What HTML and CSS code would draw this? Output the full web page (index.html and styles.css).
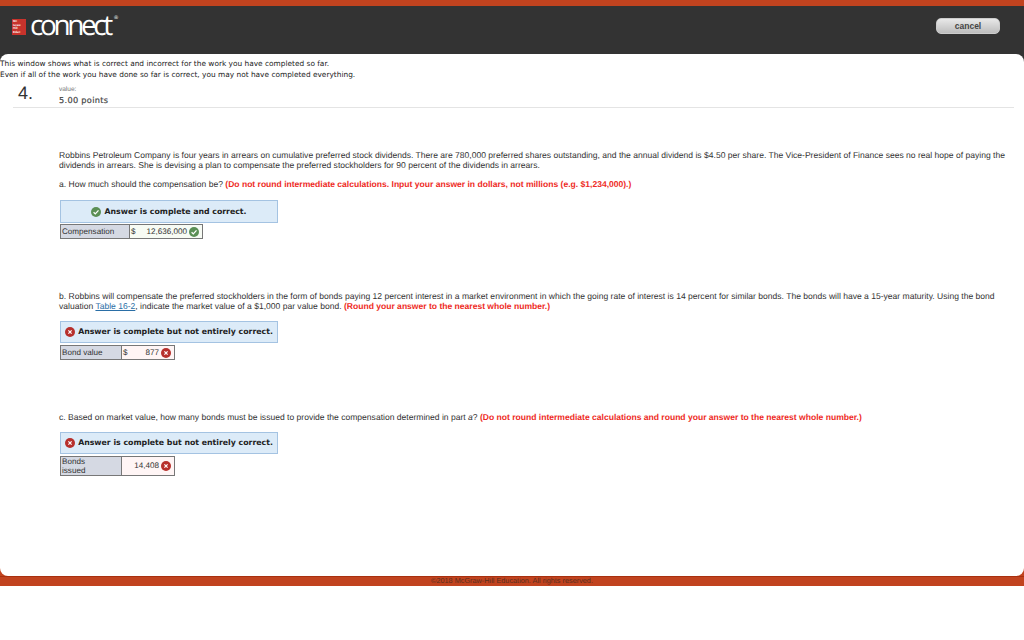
FILE: index.html
```html
<!DOCTYPE html>
<html lang="en">
<head>
    <meta charset="UTF-8">
    <title>Connect</title>
    <link rel="stylesheet" href="styles.css">
</head>
<body>
    <div class="top-strip"></div>
    <div class="header">
        <div class="logo">
            <div class="logo-mark">Mc<br>Graw<br>Hill<br>Educ</div>
            <div class="logo-word">connect<sup>®</sup></div>
        </div>
        <button class="cancel-btn">cancel</button>
    </div>

    <div class="shell">
        <div class="panel">
            <p class="intro">This window shows what is correct and incorrect for the work you have completed so far.<br>Even if all of the work you have done so far is correct, you may not have completed everything.</p>

            <div class="question-head">
                <div class="question-num">4.</div>
                <div>
                    <div class="value-label">value:</div>
                    <div class="value-points">5.00 points</div>
                </div>
            </div>

            <div class="question">
                <p class="para-first">Robbins Petroleum Company is four years in arrears on cumulative preferred stock dividends. There are 780,000 preferred shares outstanding, and the annual dividend is $4.50 per share. The Vice-President of Finance sees no real hope of paying the dividends in arrears. She is devising a plan to compensate the preferred stockholders for 90 percent of the dividends in arrears.</p>
                <p class="para-part">a. How much should the compensation be? <b class="hint">(Do not round intermediate calculations. Input your answer in dollars, not millions (e.g. $1,234,000).)</b></p>

                <div class="banner banner-a">
                    <svg class="mark" viewBox="0 0 10 10"><circle cx="5" cy="5" r="5" fill="#5b8f55"/><path d="M2.6 5.2 4.3 6.9 7.5 3.4" fill="none" stroke="#fff" stroke-width="1.3"/></svg>
                    Answer is complete and correct.
                </div>
                <div class="answer answer-a">
                    <div class="answer-label label-a">Compensation</div>
                    <div class="answer-value good"><span>$</span><span class="amount">12,636,000</span>
                        <svg class="mark" viewBox="0 0 10 10"><circle cx="5" cy="5" r="5" fill="#5b8f55"/><path d="M2.6 5.2 4.3 6.9 7.5 3.4" fill="none" stroke="#fff" stroke-width="1.3"/></svg>
                    </div>
                </div>

                <p class="para-b">b. Robbins will compensate the preferred stockholders in the form of bonds paying 12 percent interest in a market environment in which the going rate of interest is 14 percent for similar bonds. The bonds will have a 15-year maturity. Using the bond valuation <a class="table-link">Table 16-2</a>, indicate the market value of a $1,000 par value bond. <b class="hint">(Round your answer to the nearest whole number.)</b></p>

                <div class="banner">
                    <svg class="mark" viewBox="0 0 10 10"><circle cx="5" cy="5" r="5" fill="#b7302c"/><path d="M3.4 3.4 6.6 6.6M6.6 3.4 3.4 6.6" fill="none" stroke="#fff" stroke-width="1.2"/></svg>
                    Answer is complete but not entirely correct.
                </div>
                <div class="answer">
                    <div class="answer-label">Bond value</div>
                    <div class="answer-value bad"><span>$</span><span class="amount">877</span>
                        <svg class="mark" viewBox="0 0 10 10"><circle cx="5" cy="5" r="5" fill="#b7302c"/><path d="M3.4 3.4 6.6 6.6M6.6 3.4 3.4 6.6" fill="none" stroke="#fff" stroke-width="1.2"/></svg>
                    </div>
                </div>

                <p class="para-c">c. Based on market value, how many bonds must be issued to provide the compensation determined in part <i>a</i>? <b class="hint">(Do not round intermediate calculations and round your answer to the nearest whole number.)</b></p>

                <div class="banner">
                    <svg class="mark" viewBox="0 0 10 10"><circle cx="5" cy="5" r="5" fill="#b7302c"/><path d="M3.4 3.4 6.6 6.6M6.6 3.4 3.4 6.6" fill="none" stroke="#fff" stroke-width="1.2"/></svg>
                    Answer is complete but not entirely correct.
                </div>
                <div class="answer">
                    <div class="answer-label label-tall">Bonds<br>issued</div>
                    <div class="answer-value bad"><span class="amount">14,408</span>
                        <svg class="mark" viewBox="0 0 10 10"><circle cx="5" cy="5" r="5" fill="#b7302c"/><path d="M3.4 3.4 6.6 6.6M6.6 3.4 3.4 6.6" fill="none" stroke="#fff" stroke-width="1.2"/></svg>
                    </div>
                </div>
            </div>
        </div>
    </div>

    <div class="footer">©2018 McGraw-Hill Education. All rights reserved.</div>
</body>
</html>
```

FILE: styles.css
```css
* {
    margin: 0;
    padding: 0;
    box-sizing: border-box;
}

body {
    font-family: 'Liberation Sans', Arial, sans-serif;
    font-size: 8.55px;
    color: #333;
    background: #fff;
    text-rendering: geometricPrecision;
}

.top-strip {
    height: 6px;
    background: #c1431f;
}

.header {
    height: 48px;
    background: #333;
    display: flex;
    align-items: flex-start;
    justify-content: space-between;
    padding: 0 24px 0 12px;
}

.logo {
    display: flex;
    align-items: center;
    gap: 4px;
    margin-top: 6px;
}

.logo-mark {
    width: 14px;
    height: 16px;
    margin-top: 4px;
    background: #c8332c;
    color: #fff;
    font-size: 3px;
    line-height: 3.6px;
    font-weight: bold;
    padding: 1px;
    overflow: hidden;
}

.logo-word {
    font-family: 'Open Sans', sans-serif;
    font-weight: 400;
    font-size: 28px;
    line-height: 26px;
    letter-spacing: -3.4px;
    color: #fff;
}

.logo-word sup {
    font-size: 5px;
    line-height: 0;
    vertical-align: 16px;
    margin-left: 4px;
    letter-spacing: 0;
}

.cancel-btn {
    width: 64px;
    height: 16px;
    margin-top: 12px;
    border: 1px solid #ccc;
    border-radius: 5px;
    background: linear-gradient(#e8e8e8, #bdbdbd);
    color: #444;
    font-family: 'Liberation Sans', Arial, sans-serif;
    font-size: 8.5px;
    font-weight: bold;
}

/* dark behind the top corners, orange behind the bottom ones */
.shell {
    background: linear-gradient(#333 50%, #c1431f 50%);
}

.panel {
    height: 522px;
    background: #fff;
    border-radius: 8px;
    padding-top: 5px;
}

.intro {
    font-family: 'DejaVu Sans', Verdana, sans-serif;
    font-size: 7.4px;
    line-height: 10.5px;
    color: #222;
}

.question-head {
    display: flex;
    margin: 3px 10px 0 13px;
    height: 25px;
    border-bottom: 1px solid #e4e4e4;
}

.question-num {
    width: 46px;
    padding-left: 5px;
    font-size: 18px;
    line-height: 20px;
    color: #333;
}

.value-label {
    font-size: 6.5px;
    line-height: 8px;
    margin-top: 3px;
    color: #777;
}

.value-points {
    font-family: 'DejaVu Sans', Verdana, sans-serif;
    font-size: 8.2px;
    letter-spacing: 0.3px;
    line-height: 13px;
    color: #444;
    -webkit-text-stroke: 0.2px #444;
}

.question {
    padding: 0 15px 0 59px;
    line-height: 10px;
}

.para-first {
    margin-top: 42px;
}

.para-part {
    margin-top: 9px;
}

.para-b {
    margin-top: 52px;
}

.para-c {
    margin-top: 52px;
}

.hint {
    color: #ee2a24;
}

.table-link {
    color: #2a6ea6;
    text-decoration: underline;
}

.banner {
    width: 218px;
    height: 22px;
    margin: 10px 0 0 1px;
    display: flex;
    align-items: center;
    justify-content: center;
    gap: 3px;
    background: #dcebf8;
    border: 1px solid #a4c3e2;
    font-family: 'DejaVu Sans', Verdana, sans-serif;
    font-size: 7.8px;
    font-weight: bold;
    color: #222;
}

.banner-a {
    height: 23px;
    margin-top: 11px;
}

.mark {
    width: 10px;
    height: 10px;
    flex: none;
}

.answer {
    display: flex;
    width: 115px;
    margin: 2px 0 0 1px;
    border: 1px solid #777;
}

.answer-a {
    width: 143px;
    margin-top: 1px;
}

.answer-label {
    width: 61px;
    flex: none;
    padding: 2px 1px;
    background: #d5d9e3;
    border-right: 1px solid #777;
    line-height: 9px;
    font-size: 8.1px;
    color: #333;
}

.label-a {
    width: 69px;
}

.label-tall {
    padding: 0 1px;
}

.answer-value {
    flex: 1;
    display: flex;
    align-items: center;
    gap: 2px;
    padding: 0 3px 0 1px;
    font-size: 8.1px;
}

.answer-value .amount {
    margin-left: auto;
}

.good {
    background: #f7fbf4;
}

.bad {
    background: #fff5f5;
}

.footer {
    height: 10px;
    background: #c1431f;
    border-top: 1px solid #a8300f;
    text-align: center;
    font-size: 7.3px;
    line-height: 8px;
    color: #5a3020;
}
```
